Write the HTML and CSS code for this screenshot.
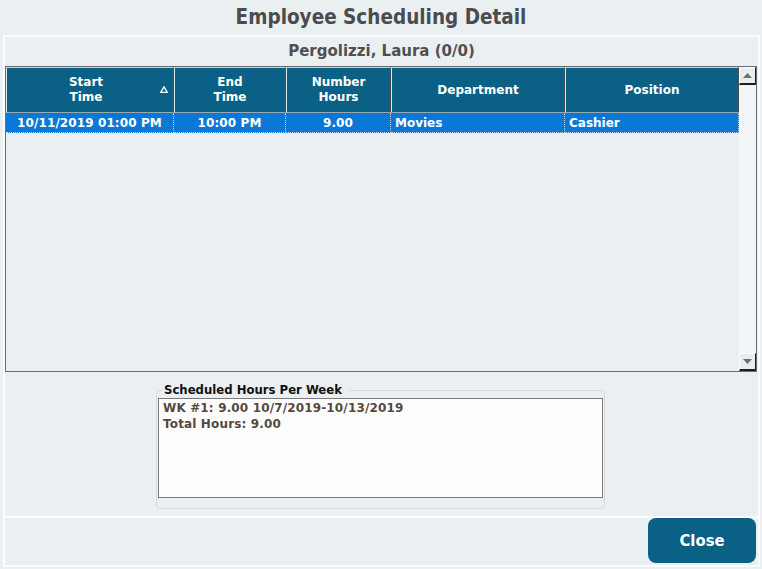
FILE: index.html
```html
<!DOCTYPE html>
<html lang="en">
  <head>
    <meta charset="UTF-8" />
    <meta name="viewport" content="width=device-width, initial-scale=1.0" />
    <title>Employee Scheduling Detail</title>
    <link rel="stylesheet" href="styles.css">
  </head>
  <body>
    <h1 class="title">Employee Scheduling Detail</h1>

    <div class="panel">
      <div class="employee">Pergolizzi, Laura (0/0)</div>

      <div class="grid">
        <div class="grid-body">
          <table class="shifts">
            <colgroup>
              <col class="c-start">
              <col class="c-end">
              <col class="c-hours">
              <col class="c-dept">
              <col class="c-pos">
            </colgroup>
            <thead>
              <tr>
                <th class="sorted">Start<br>Time
                  <svg class="sort-icon" width="8" height="7" viewBox="0 0 8 7">
                    <path d="M4 0.8 L7.3 6.3 L0.7 6.3 Z" fill="none" stroke="#fff" stroke-width="1.3"/>
                  </svg>
                </th>
                <th>End<br>Time</th>
                <th>Number<br>Hours</th>
                <th>Department</th>
                <th>Position</th>
              </tr>
            </thead>
            <tbody>
              <tr class="selected">
                <td class="center">10/11/2019 01:00 PM</td>
                <td class="center">10:00 PM</td>
                <td class="center">9.00</td>
                <td>Movies</td>
                <td>Cashier</td>
              </tr>
            </tbody>
          </table>
        </div>
        <div class="scrollbar">
          <div class="scroll-btn">
            <svg width="9" height="5" viewBox="0 0 9 5"><path d="M0 5 L4.5 0 L9 5 Z" fill="#6e6e6e"/></svg>
          </div>
          <div class="scroll-track"></div>
          <div class="scroll-btn">
            <svg width="9" height="5" viewBox="0 0 9 5"><path d="M0 0 L9 0 L4.5 5 Z" fill="#6e6e6e"/></svg>
          </div>
        </div>
      </div>

      <div class="summary">
        <fieldset class="weekly">
          <legend>Scheduled Hours Per Week</legend>
          <div class="weekly-text">WK #1: 9.00 10/7/2019-10/13/2019<br>Total Hours: 9.00</div>
        </fieldset>
      </div>

      <div class="footer">
        <button class="close-btn">Close</button>
      </div>
    </div>
  </body>
</html>
```

FILE: styles.css
```css
body {
    margin: 0;
    background-color: #eaeff2;
    font-family: "DejaVu Sans", Verdana, sans-serif;
    font-weight: bold;
}

.title {
    margin: 0;
    height: 35px;
    line-height: 35px;
    text-align: center;
    font-family: "DejaVu Sans Condensed", "DejaVu Sans", sans-serif;
    font-size: 20.5px;
    color: #4b4b4b;
}

.panel {
    margin: 0 2px 0 3px;
    height: 528px;
    border: 2px solid #fbfcfd;
    display: flex;
    flex-direction: column;
}

.employee {
    height: 29px;
    line-height: 29px;
    text-align: center;
    font-size: 15px;
    color: #505050;
}

/* schedule grid */
.grid {
    display: flex;
    height: 304px;
    margin-right: 1px;
    border: 1px solid #6b6b6b;
}

.grid-body {
    width: 733px;
}

.shifts {
    width: 733px;
    table-layout: fixed;
    border-collapse: separate;
    border-spacing: 0;
    font-size: 12px;
}

.c-start { width: 168px; }
.c-end { width: 112px; }
.c-hours { width: 105px; }
.c-dept { width: 174px; }
.c-pos { width: 174px; }

.shifts th {
    height: 44px;
    padding: 0;
    line-height: 15px;
    background-color: #0b6185;
    color: #fff;
    border-top: 1px solid #c9d3d9;
    border-left: 1px solid #dde4e8;
    border-right: 1px solid #4e4e4e;
    border-bottom: 1px solid #9aa8b0;
}

.shifts th.sorted {
    position: relative;
    padding-right: 8px;
}

.sort-icon {
    position: absolute;
    right: 5px;
    top: 18px;
}

.shifts td {
    height: 19px;
    padding: 0 4px;
    white-space: nowrap;
    color: #fff;
    background-color: #0a78d7;
    border-right: 1px dotted #b9d7f3;
    border-bottom: 1px dotted #b9d7f3;
}

.shifts td.center {
    text-align: center;
    letter-spacing: 0.1px;
}

.scrollbar {
    width: 17px;
    display: flex;
    flex-direction: column;
    background-color: #f3f6f8;
}

.scroll-btn {
    height: 15px;
    display: flex;
    align-items: center;
    justify-content: center;
    background-color: #e8edf0;
    border-top: 1px solid #fff;
    border-left: 1px solid #fff;
    border-right: 1px solid #1e1e1e;
    border-bottom: 2px solid #1e1e1e;
}

.scroll-track {
    flex: 1;
}

/* weekly totals */
.summary {
    height: 144px;
}

.weekly {
    width: 445px;
    margin: 11px 0 0 151px;
    padding: 0 1px 10px;
    border: 1px solid #d4dce1;
    border-radius: 4px;
}

.weekly legend {
    margin-left: 4px;
    padding: 0 7px 0 2px;
    line-height: 15px;
    font-size: 11.7px;
    color: #111;
}

.weekly-text {
    height: 97px;
    padding: 1px 4px 0;
    line-height: 16px;
    font-size: 12px;
    letter-spacing: 0.15px;
    color: #54493f;
    background-color: #fdfdfd;
    border: 1px solid #7b7b7b;
}

.footer {
    flex: 1;
    display: flex;
    justify-content: flex-end;
    align-items: flex-start;
    border-top: 2px solid #fbfcfd;
}

.close-btn {
    width: 108px;
    height: 45px;
    margin-right: 2px;
    padding-bottom: 2px;
    border: none;
    border-radius: 8px;
    background-color: #0b6185;
    color: #fff;
    font-family: "DejaVu Sans Condensed", "DejaVu Sans", sans-serif;
    font-weight: bold;
    font-size: 16.5px;
    cursor: pointer;
}
```
